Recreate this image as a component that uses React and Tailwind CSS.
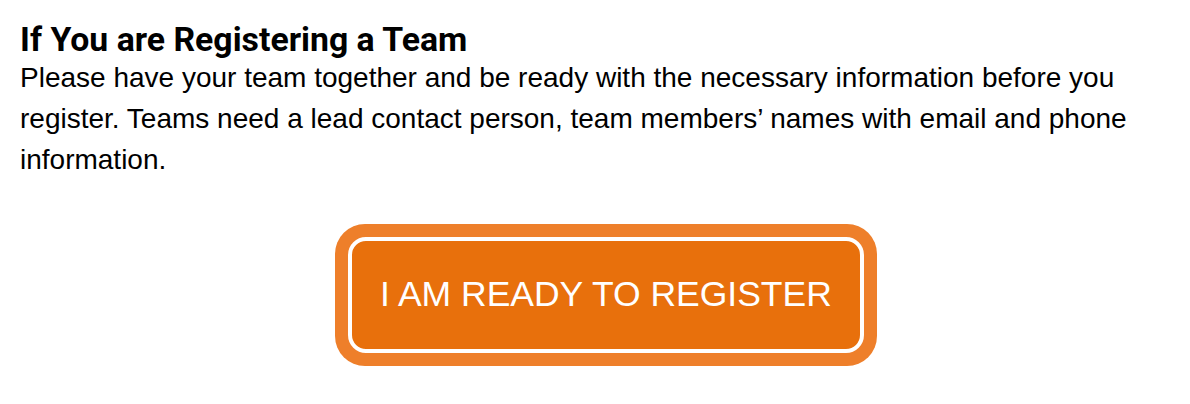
import React from 'react';

const App = () => {
  return (
    <div className="w-[1190px] h-[404px] bg-white px-[20px] pt-[20px]">
      <h2
        className="text-[33.8px] leading-[40px] font-bold text-black"
        style={{ fontFamily: 'Roboto, "Liberation Sans", sans-serif' }}
      >
        If You are Registering a Team
      </h2>
      <p
        className="text-[28px] leading-[41px] text-black -mt-[3px] w-[1140px]"
        style={{ fontFamily: '"Liberation Sans", Arial, sans-serif' }}
      >
        Please have your team together and be ready with the necessary information before you register. Teams need a lead contact person, team members’ names with email and phone information.
      </p>
      <div className="flex justify-center mt-[44px] pl-[22px]">
        <div className="bg-[#ee7f2a] p-[13px] rounded-[30px]">
          <div
            className="w-[516px] h-[116px] flex items-center justify-center border-4 border-white rounded-[18px] bg-[#e8700c] text-white text-[35.5px]"
            style={{ fontFamily: '"Liberation Sans", Arial, sans-serif' }}
          >
            I AM READY TO REGISTER
          </div>
        </div>
      </div>
    </div>
  );
};

export default App;
